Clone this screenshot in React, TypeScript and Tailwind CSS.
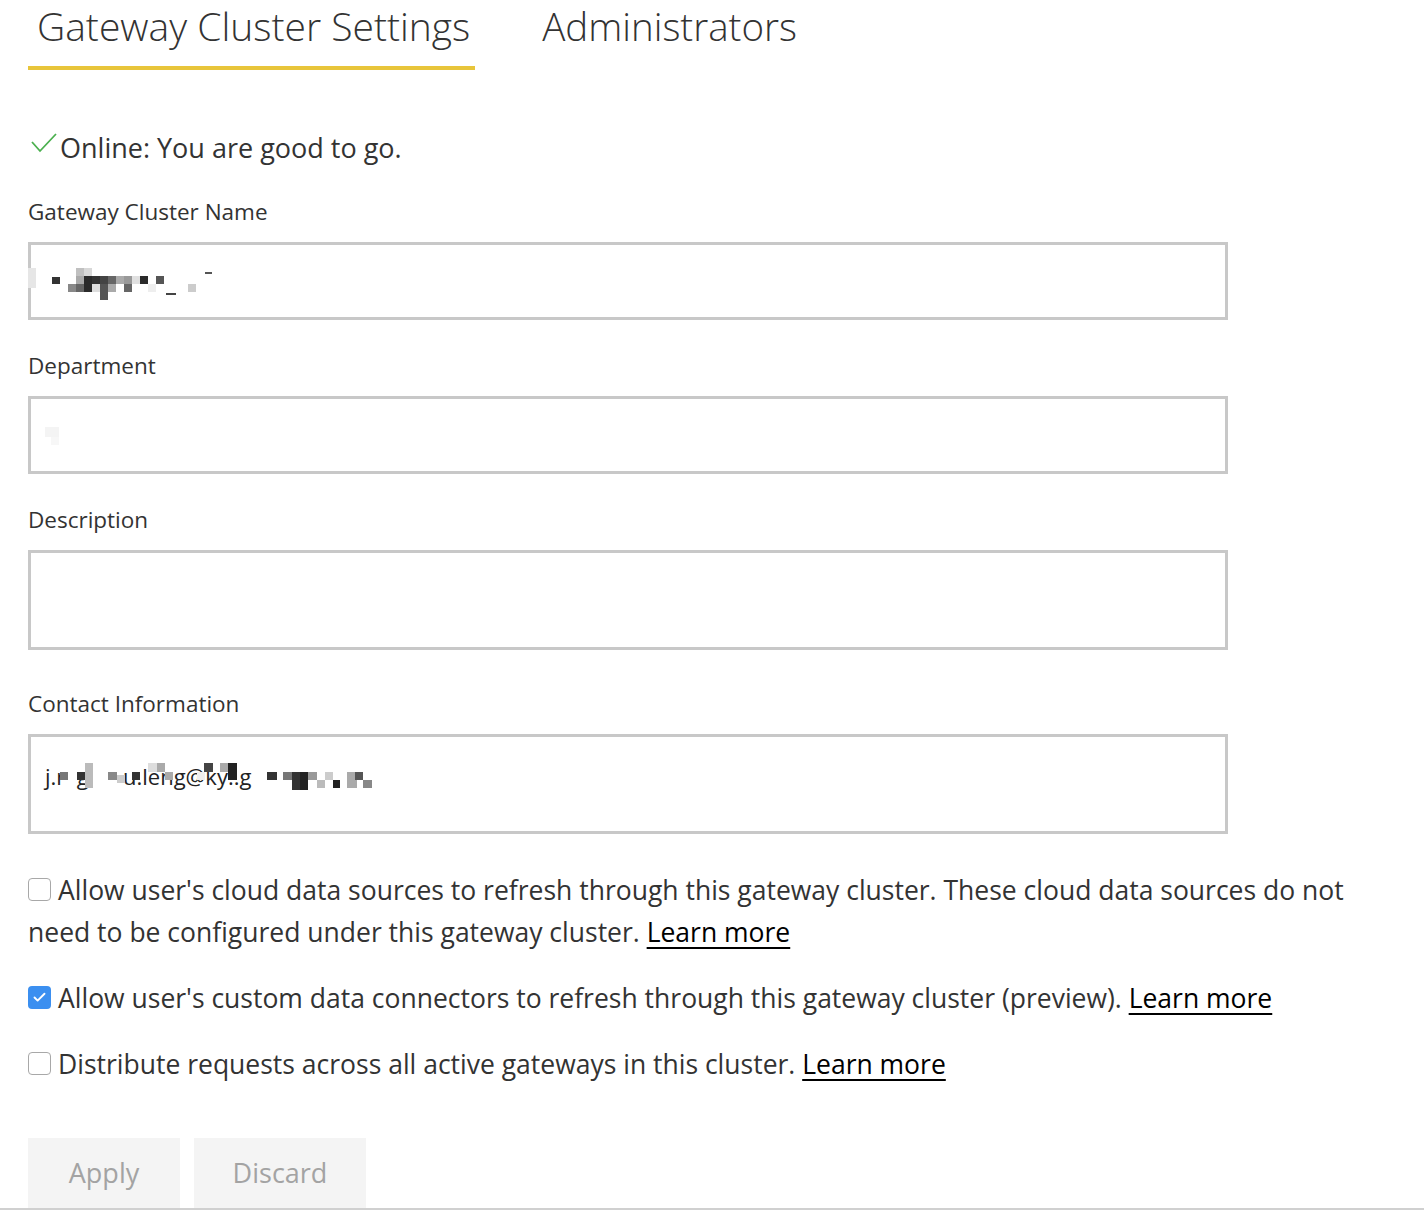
import { Check } from 'lucide-react';

const font = { fontFamily: '"Open Sans", "Liberation Sans", sans-serif' };

// pixelated (blurred-out) values, page coords [x, y, w, h, colour]
const nameBlocks: [number, number, number, number, string][] = [
  [28, 268, 8, 20, '#e6e6e6'], [52, 277, 8, 7, '#333'], [68, 284, 8, 8, '#888'], [76, 268, 8, 8, '#c0c0c0'],
  [76, 276, 8, 8, '#aaa'], [76, 284, 8, 8, '#666'], [84, 268, 8, 8, '#d8d8d8'], [84, 276, 8, 16, '#2a2a2a'],
  [92, 276, 8, 8, '#333'], [92, 284, 8, 8, '#ddd'], [100, 276, 8, 8, '#444'], [100, 284, 8, 16, '#555'],
  [108, 276, 8, 8, '#666'], [108, 284, 8, 8, '#aaa'], [116, 276, 8, 8, '#aaa'], [124, 276, 8, 8, '#999'],
  [124, 284, 8, 8, '#666'], [132, 276, 8, 8, '#e0e0e0'], [140, 276, 8, 8, '#2a2a2a'], [148, 284, 8, 8, '#eee'],
  [156, 276, 8, 8, '#555'], [166, 293, 10, 2, '#444'], [188, 284, 8, 8, '#ccc'], [205, 272, 7, 2, '#555'],
];

const contactBlocks: [number, number, number, number, string][] = [
  [60, 772, 8, 8, '#777'], [77, 772, 8, 8, '#333'], [85, 763, 8, 25, '#bbb'], [108, 772, 9, 8, '#888'],
  [117, 775, 8, 8, '#ccc'], [132, 772, 8, 8, '#333'], [148, 763, 9, 9, '#ddd'], [157, 763, 8, 9, '#aaa'],
  [165, 772, 8, 8, '#aaa'], [197, 772, 8, 8, '#eee'], [204, 763, 9, 9, '#444'], [220, 763, 8, 9, '#aaa'],
  [228, 763, 9, 17, '#222'], [267, 772, 10, 8, '#333'], [283, 772, 9, 8, '#777'], [292, 772, 8, 18, '#333'],
  [300, 772, 8, 18, '#222'], [308, 772, 9, 8, '#999'], [317, 780, 8, 8, '#bbb'], [325, 772, 8, 8, '#ccc'],
  [333, 780, 7, 8, '#222'], [347, 772, 10, 16, '#aaa'], [355, 772, 8, 8, '#555'], [363, 780, 9, 8, '#888'],
];

function Pixels({ blocks, top }: { blocks: [number, number, number, number, string][]; top: number }) {
  return (
    <>
      {blocks.map(([x, y, w, h, c], i) => (
        <span key={i} className="absolute" style={{ left: x - 31, top: y - top - 3, width: w, height: h, background: c }} />
      ))}
    </>
  );
}

function Field({ label, tall, children }: { label: string; tall?: boolean; children?: React.ReactNode }) {
  return (
    <div className="flex flex-col">
      <label className="text-[22.5px] leading-[30px] text-[#333]">{label}</label>
      <div
        className={`relative mt-[15px] w-[1200px] border-[3px] border-[#c8c8c8] bg-white ${tall ? 'h-[100px]' : 'h-[78px]'}`}
      >
        {children}
      </div>
    </div>
  );
}

function Box({ checked }: { checked?: boolean }) {
  return checked ? (
    <span className="mt-[9px] flex h-[23px] w-[23px] shrink-0 items-center justify-center rounded-[4px] bg-[#3b8ff0]">
      <Check className="h-[15px] w-[15px] text-white" strokeWidth={3} />
    </span>
  ) : (
    <span className="mt-[9px] h-[23px] w-[23px] shrink-0 rounded-[4px] border border-[#a8a8a8] bg-white" />
  );
}

function LearnMore() {
  return <a className="cursor-pointer text-black underline decoration-[2px] underline-offset-[5px]">Learn more</a>;
}

export default function App() {
  return (
    <div className="min-h-[1210px] bg-white text-[#333]" style={font}>
      <div className="flex items-start pl-[28px]">
        <div className="flex flex-col">
          <span className="px-[9px] text-[39px] font-light leading-[52px] text-[#333]">Gateway Cluster Settings</span>
          <span className="mt-[14px] h-[4px] w-[447px] bg-[#e8c53a]" />
        </div>
        <span className="ml-[63px] text-[38.5px] font-light leading-[52px] text-[#333]">Administrators</span>
      </div>

      <div className="pl-[28px]">
        <div className="mt-[60px] flex items-start">
          <svg width="28" height="22" viewBox="0 0 28 22" className="mt-[2px] mr-[2px] ml-[2px]">
            <path d="M2 10 L10 19 L26 2" fill="none" stroke="#4bb04f" strokeWidth="1.8" />
          </svg>
          <span className="text-[27px] leading-[36px]">Online: You are good to go.</span>
        </div>

        <div className="mt-[31px] flex flex-col gap-[31px]">
          <Field label="Gateway Cluster Name">
            <Pixels blocks={nameBlocks} top={242} />
          </Field>
          <Field label="Department">
            <span className="absolute left-[14px] top-[28px] h-[10px] w-[14px] bg-[#f4f4f4]" />
            <span className="absolute left-[20px] top-[38px] h-[8px] w-[8px] bg-[#f7f7f7]" />
          </Field>
          <Field label="Description" tall />
          <div className="mt-[8px]">
            <Field label="Contact Information" tall>
              <span className="absolute left-[14px] top-[24px] whitespace-pre text-[22px] leading-[30px] text-[#222]">
                {'j.r  g      u.leng@ky..g'}
              </span>
              <Pixels blocks={contactBlocks} top={734} />
            </Field>
          </div>
        </div>

        <div className="mt-[35px] flex flex-col gap-[24px] text-[26.5px] leading-[42px]">
          <div className="flex items-start gap-[7px]">
            <Box />
            <p>
              Allow user's cloud data sources to refresh through this gateway cluster. These cloud data sources do not
              <br />
              <span className="-ml-[30px]">need to be configured under this gateway cluster. </span>
              <LearnMore />
            </p>
          </div>
          <div className="flex items-start gap-[7px]">
            <Box checked />
            <p>
              Allow user's custom data connectors to refresh through this gateway cluster (preview). <LearnMore />
            </p>
          </div>
          <div className="flex items-start gap-[7px]">
            <Box />
            <p>
              Distribute requests across all active gateways in this cluster. <LearnMore />
            </p>
          </div>
        </div>

        <div className="mt-[53px] flex gap-[14px]">
          <button className="h-[70px] w-[152px] bg-[#f4f4f4] text-[27px] text-[#a3a3a3]">Apply</button>
          <button className="h-[70px] w-[172px] bg-[#f4f4f4] text-[27px] text-[#a3a3a3]">Discard</button>
        </div>
      </div>
      <div className="h-[2px] w-full bg-[#d0d0d0]" />
    </div>
  );
}
